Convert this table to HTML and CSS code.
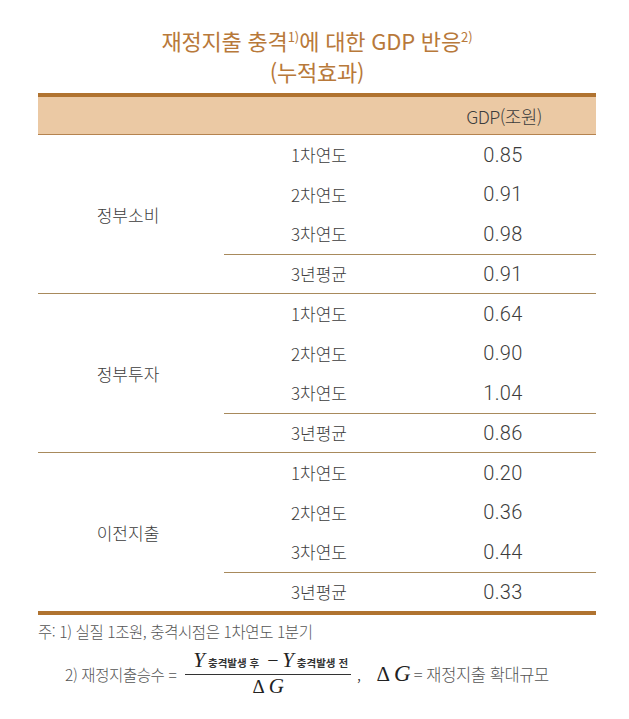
FILE: index.html
```html
<!DOCTYPE html>
<html lang="ko">
<head>
<meta charset="utf-8">
<title>재정지출 충격에 대한 GDP 반응</title>
<link rel="stylesheet" href="styles.css">
</head>
<body>
<div class="page">
  <h1 class="title"><span class="tline">재정지출 충격<sup>1)</sup>에 대한 GDP 반응<sup>2)</sup></span><span class="tline">(누적효과)</span></h1>

  <div class="table">
    <div class="head">
      <span></span><span></span><span class="hval">GDP(조원)</span>
    </div>

    <div class="group">
      <div class="glabel">정부소비</div>
      <div class="rows">
        <div class="row"><span class="year">1차연도</span><span class="val">0.85</span></div>
        <div class="row"><span class="year">2차연도</span><span class="val">0.91</span></div>
        <div class="row"><span class="year">3차연도</span><span class="val">0.98</span></div>
        <div class="row avg"><span class="year">3년평균</span><span class="val">0.91</span></div>
      </div>
    </div>

    <div class="group">
      <div class="glabel">정부투자</div>
      <div class="rows">
        <div class="row"><span class="year">1차연도</span><span class="val">0.64</span></div>
        <div class="row"><span class="year">2차연도</span><span class="val">0.90</span></div>
        <div class="row"><span class="year">3차연도</span><span class="val">1.04</span></div>
        <div class="row avg"><span class="year">3년평균</span><span class="val">0.86</span></div>
      </div>
    </div>

    <div class="group last">
      <div class="glabel">이전지출</div>
      <div class="rows">
        <div class="row"><span class="year">1차연도</span><span class="val">0.20</span></div>
        <div class="row"><span class="year">2차연도</span><span class="val">0.36</span></div>
        <div class="row"><span class="year">3차연도</span><span class="val">0.44</span></div>
        <div class="row avg"><span class="year">3년평균</span><span class="val">0.33</span></div>
      </div>
    </div>
  </div>

  <div class="notes">
    <div class="note1">주: 1) 실질 1조원, 충격시점은 1차연도 1분기</div>
    <div class="note2">
      <span class="lhs">2) 재정지출승수 =</span>
      <span class="frac">
        <span class="num"><i class="mv">Y</i><span class="msub">충격발생 후</span><span class="minus">−</span><i class="mv">Y</i><span class="msub">충격발생 전</span></span>
        <span class="den"><span class="delta">Δ</span><i class="mv">G</i></span>
      </span>
      <span class="comma">,</span>
      <span class="dg"><span class="delta">Δ</span><i class="mv">G</i></span>
      <span class="rhs">= 재정지출 확대규모</span>
    </div>
  </div>
</div>
</body>
</html>
```

FILE: styles.css
```css
html, body {
  margin: 0;
  padding: 0;
  background: #ffffff;
}

.page {
  width: 629px;
  padding-top: 25px;
  font-family: "Noto Sans CJK KR", "Noto Sans", sans-serif;
  font-weight: 300;
  color: #3c3c3c;
}

.title {
  margin: 0 0 6px 38px;
  width: 558px;
  text-align: center;
  font-size: 22px;
  font-weight: 400;
  color: #b8793a;
  letter-spacing: -0.2px;
}

.tline {
  display: block;
  line-height: 31px;
}

.title sup {
  font-size: 13px;
  line-height: 0;
  vertical-align: 8px;
  letter-spacing: 0;
}

.table {
  width: 558px;
  margin-left: 38px;
  border-top: 4px solid #b07330;
  border-bottom: 4px solid #b07330;
}

.head {
  display: grid;
  grid-template-columns: 1fr 1fr 1fr;
  align-items: center;
  height: 38px;
  box-sizing: border-box;
  background: #ebc9a4;
  border-bottom: 1px solid #b5834f;
}

.hval {
  text-align: center;
  padding-left: 2px;
  font-size: 18px;
  letter-spacing: -0.6px;
}

.group {
  display: grid;
  grid-template-columns: 1fr 2fr;
  border-bottom: 1px solid #a88a5c;
}

.group.last {
  border-bottom: none;
}

.glabel {
  display: flex;
  align-items: center;
  justify-content: center;
  padding-right: 6px;
  font-size: 17px;
}

.rows {
  display: flex;
  flex-direction: column;
}

.row {
  display: grid;
  grid-template-columns: 1fr 1fr;
  align-items: center;
  height: 39.5px;
  box-sizing: border-box;
}

.row.avg {
  border-top: 1px solid #a88a5c;
}

.year {
  text-align: center;
  font-size: 17px;
  padding-left: 4px;
}

.val {
  text-align: center;
  font-family: Roboto, "Liberation Sans", sans-serif;
  font-weight: 300;
  font-size: 20px;
  letter-spacing: 0.4px;
  color: #3c3c3c;
}

.notes {
  margin-left: 38px;
  margin-top: 6px;
  font-size: 15.5px;
  color: #555555;
  letter-spacing: -0.4px;
}

.note1 {
  line-height: 20px;
}

.note2 {
  display: flex;
  align-items: center;
  margin-top: 9px;
  padding-left: 27px;
  line-height: 20px;
}

.frac {
  display: inline-flex;
  flex-direction: column;
  align-items: center;
  margin-left: 9px;
}

.num {
  display: flex;
  align-items: baseline;
  padding: 0 3px 1px 8px;
  border-bottom: 1px solid #333333;
  color: #222222;
  white-space: nowrap;
}

.den {
  display: flex;
  align-items: baseline;
  padding-top: 1px;
  color: #222222;
}

.mv {
  font-family: "Liberation Serif", "Times New Roman", serif;
  font-style: italic;
  font-weight: 400;
  font-size: 21px;
  letter-spacing: 0;
  color: #222222;
}

.msub {
  font-size: 10.5px;
  font-weight: 700;
  margin-left: 3px;
  letter-spacing: 0;
  color: #333333;
}

.minus {
  font-family: "Liberation Serif", "Times New Roman", serif;
  font-size: 20px;
  margin: 0 4px 0 8px;
  color: #222222;
}

.delta {
  font-family: "Liberation Serif", "Times New Roman", serif;
  font-size: 19px;
  margin-right: 4px;
  letter-spacing: 0;
  color: #222222;
}

.dg .delta {
  font-size: 21px;
}

.dg .mv {
  font-size: 23px;
}

.comma {
  margin-left: 6px;
  color: #222222;
}

.dg {
  display: inline-flex;
  align-items: baseline;
  margin-left: 16px;
}

.rhs {
  margin-left: 3px;
  font-size: 16.5px;
}
```
